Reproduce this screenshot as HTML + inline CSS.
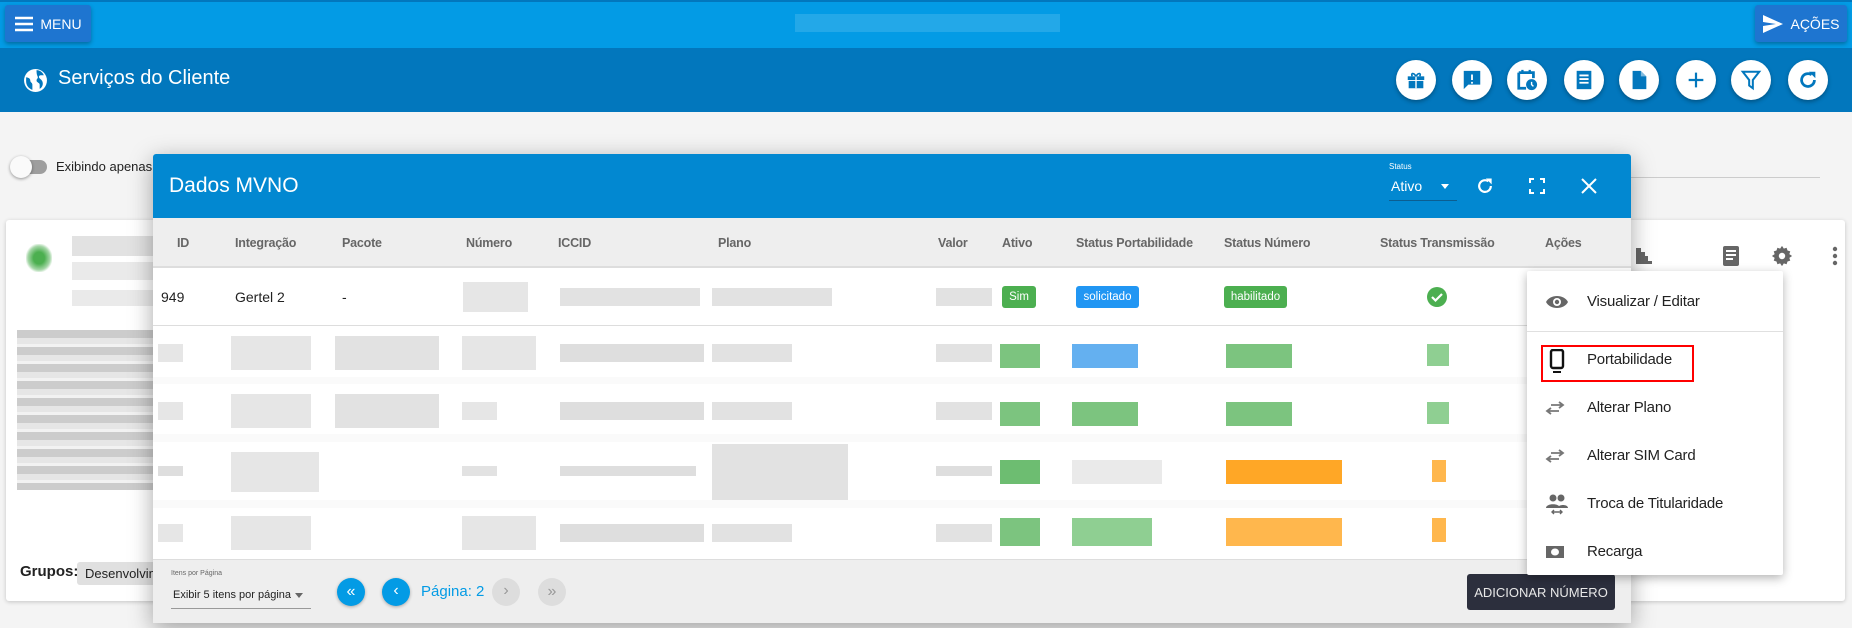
<!DOCTYPE html>
<html><head><meta charset="utf-8"><style>
*{box-sizing:border-box;margin:0;padding:0}
body{width:1852px;height:628px;overflow:hidden;background:#f4f4f4;font-family:"Liberation Sans",Roboto,sans-serif;position:relative}
.a{position:absolute}
.topbar{left:0;top:0;width:1852px;height:48px;background:#039be5;border-top:2px solid #0277bd}
.hdr{left:0;top:48px;width:1852px;height:64px;background:#0277bd}
.btn{background:#1e75d0;color:#fff;border-radius:3px;box-shadow:0 2px 4px rgba(0,0,0,.3);font-size:14px;display:flex;align-items:center;justify-content:center;gap:6px}
.rb{width:40px;height:40px;border-radius:50%;background:#fff;top:60px;display:flex;align-items:center;justify-content:center;box-shadow:0 2px 4px rgba(0,0,0,.3)}
.card{left:6px;top:220px;width:1839px;height:381px;background:#fff;border-radius:3px;box-shadow:0 1px 4px rgba(0,0,0,.2)}
.dlg{left:153px;top:154px;width:1478px;height:469px;background:#fff;border-radius:3px;box-shadow:0 6px 24px rgba(0,0,0,.35);overflow:hidden}
.th{font-size:12.5px;font-weight:bold;color:#666;top:236px;letter-spacing:-.2px}
.bl{background:#d6d6d6}
.badge{height:22px;border-radius:3px;color:#fff;font-size:11.5px;display:flex;align-items:center;justify-content:center;top:286px}
.mi{font-size:15px;color:#222;left:1587px;letter-spacing:-.2px}
.ic{left:1545px}
</style></head><body>
<div class="a topbar"></div>
<div class="a btn" style="left:5px;top:5px;width:86px;height:37px;font-weight:500">
<svg width="20" height="16" viewBox="0 0 20 16"><path d="M1 2h18M1 8h18M1 14h18" stroke="#fff" stroke-width="2.4"/></svg>MENU</div>
<div class="a" style="left:795px;top:14px;width:265px;height:18px;background:rgba(255,255,255,.13)"></div>
<div class="a btn" style="left:1755px;top:5px;width:92px;height:37px">
<svg width="22" height="20" viewBox="0 0 22 20"><path d="M1 1L21 10 1 19 1 12 14 10 1 8Z" fill="#fff"/></svg>AÇÕES</div>
<div class="a hdr"></div>
<svg class="a" style="left:23px;top:68px" width="25" height="25" viewBox="0 0 24 24"><circle cx="12" cy="12" r="11" fill="#fff"/><path d="M3 9c2 0 4 1 4 3s2 2 2 4v5c-3-1-6-4-6-8zM13 2c3 0 6 2 7 5h-3c-2 0-2 2-1 3s3 2 3 5c0 2-1 4-3 5v-4c0-2-3-2-3-4s2-2 1-4-1-4-1-6z" fill="#0277bd"/></svg>
<div class="a" style="left:58px;top:67px;font-size:20px;color:#fff">Serviços do Cliente</div>
<div class="a rb" style="left:1396px"><svg width="22" height="22" viewBox="0 0 24 24"><rect x="3" y="8" width="18" height="4" fill="#0277bd"/><rect x="4" y="13" width="16" height="8" fill="#0277bd"/><path d="M12 8v13" stroke="#fff" stroke-width="1.5"/><path d="M12 8C9 3 6 5 8 8M12 8c3-5 6-3 4 0" stroke="#0277bd" stroke-width="1.8" fill="none"/></svg></div>
<div class="a rb" style="left:1452px"><svg width="22" height="22" viewBox="0 0 24 24"><path d="M3 2h18v15H8l-5 5z" fill="#0277bd"/><path d="M12 6v6M12 14v2" stroke="#fff" stroke-width="2"/></svg></div>
<div class="a rb" style="left:1507px"><svg width="22" height="22" viewBox="0 0 24 24"><path d="M3 4h16v6M3 4v17h8" stroke="#0277bd" stroke-width="3" fill="none"/><path d="M7 1v4M15 1v4" stroke="#0277bd" stroke-width="2.5"/><circle cx="17" cy="17" r="6" fill="#0277bd"/><path d="M17 14v3l2 2" stroke="#fff" stroke-width="1.5" fill="none"/></svg></div>
<div class="a rb" style="left:1564px"><svg width="22" height="22" viewBox="0 0 24 24"><rect x="4" y="2" width="16" height="20" fill="#0277bd"/><path d="M7 7h10M7 11h10M7 15h10" stroke="#fff" stroke-width="2"/></svg></div>
<div class="a rb" style="left:1619px"><svg width="22" height="22" viewBox="0 0 24 24"><path d="M5 2h9l6 6v14H5z" fill="#0277bd"/><path d="M14 2v6h6" fill="#fff" opacity=".5"/></svg></div>
<div class="a rb" style="left:1676px"><svg width="22" height="22" viewBox="0 0 24 24"><path d="M12 4v16M4 12h16" stroke="#0277bd" stroke-width="2.4"/></svg></div>
<div class="a rb" style="left:1731px"><svg width="22" height="22" viewBox="0 0 24 24"><path d="M3 3h18l-7 9v9l-4-3v-6z" stroke="#0277bd" stroke-width="2.2" fill="none"/></svg></div>
<div class="a rb" style="left:1788px"><svg width="22" height="22" viewBox="0 0 24 24"><path d="M19 12a7 7 0 1 1-3-5.7" stroke="#0277bd" stroke-width="3" fill="none"/><path d="M13 3h7v7z" fill="#0277bd"/></svg></div>

<div class="a" style="left:12px;top:160px;width:35px;height:14px;border-radius:7px;background:#9e9e9e"></div>
<div class="a" style="left:10px;top:156px;width:22px;height:22px;border-radius:50%;background:#fafafa;box-shadow:0 1px 3px rgba(0,0,0,.4)"></div>
<div class="a" style="left:56px;top:159px;font-size:13px;color:#222">Exibindo apenas</div>
<div class="a" style="left:1630px;top:177px;width:190px;height:1px;background:#ccc"></div>

<div class="a card"></div>
<div class="a" style="left:26px;top:244px;width:26px;height:28px;background:radial-gradient(#4caf50 30%,#a5d6a7 60%,transparent 75%)"></div>
<div class="a bl" style="left:72px;top:236px;width:90px;height:20px;opacity:.7"></div>
<div class="a bl" style="left:72px;top:262px;width:90px;height:18px;opacity:.5"></div>
<div class="a bl" style="left:72px;top:290px;width:90px;height:16px;opacity:.5"></div>
<div class="a bl" style="left:17px;top:330px;width:140px;height:160px;opacity:.75;background:repeating-linear-gradient(#bbb 0 8px,#ddd 8px 14px,#eee 14px 17px)"></div>
<div class="a" style="left:20px;top:563px;font-size:15px;font-weight:bold;color:#222">Grupos:</div>
<div class="a" style="left:77px;top:562px;width:80px;height:23px;background:#e0e0e0;border-radius:3px;font-size:13px;color:#222;padding:4px 8px;overflow:hidden;white-space:nowrap">Desenvolvimento</div>
<svg class="a" style="left:1634px;top:246px" width="20" height="20" viewBox="0 0 20 20"><path d="M2 2v16h16v-3H14V10h-3V6H7V2z" fill="#666"/></svg>
<svg class="a" style="left:1721px;top:245px" width="20" height="22" viewBox="0 0 20 22"><rect x="2" y="1" width="16" height="20" rx="2" fill="#666"/><path d="M5 6h10M5 10h10M5 14h7" stroke="#fff" stroke-width="2"/></svg>
<svg class="a" style="left:1771px;top:245px" width="22" height="22" viewBox="0 0 24 24"><path d="M12 1l2 3 3-1 1 3 3 1-1 3 3 2-3 2 1 3-3 1-1 3-3-1-2 3-2-3-3 1-1-3-3-1 1-3-3-2 3-2-1-3 3-1 1-3 3 1z" fill="#666"/><circle cx="12" cy="12" r="3.5" fill="#fff"/></svg>
<svg class="a" style="left:1832px;top:246px" width="6" height="20" viewBox="0 0 6 20"><circle cx="3" cy="3" r="2.2" fill="#666"/><circle cx="3" cy="10" r="2.2" fill="#666"/><circle cx="3" cy="17" r="2.2" fill="#666"/></svg>

<div class="a dlg">
<div class="a" style="left:0;top:0;width:1478px;height:64px;background:#0288d1"></div>
<div class="a" style="left:16px;top:20px;font-size:21px;color:#fff">Dados MVNO</div>
<div class="a" style="left:1236px;top:8px;font-size:8px;color:#fff">Status</div>
<div class="a" style="left:1238px;top:24px;font-size:14px;color:#fff">Ativo</div>
<div class="a" style="left:1288px;top:30px;width:0;height:0;border:4px solid transparent;border-top:5px solid #fff"></div>
<div class="a" style="left:1236px;top:46px;width:68px;height:1px;background:#0b5e91"></div>
<svg class="a" style="left:1322px;top:22px" width="20" height="20" viewBox="0 0 24 24"><path d="M19 12a7 7 0 1 1-3-5.7" stroke="#fff" stroke-width="2.6" fill="none"/><path d="M13 3h7v7z" fill="#fff"/></svg>
<svg class="a" style="left:1376px;top:24px" width="16" height="16" viewBox="0 0 16 16"><path d="M1 5V1h4M11 1h4v4M15 11v4h-4M5 15H1v-4" stroke="#fff" stroke-width="2" fill="none"/></svg>
<svg class="a" style="left:1428px;top:24px" width="16" height="16" viewBox="0 0 16 16"><path d="M1 1l14 14M15 1L1 15" stroke="#fff" stroke-width="2"/></svg>
<div class="a" style="left:0;top:64px;width:1478px;height:50px;background:#eeeeee;border-bottom:2px solid #ddd"></div>
</div>
<div class="a th" style="left:177px">ID</div>
<div class="a th" style="left:235px">Integração</div>
<div class="a th" style="left:342px">Pacote</div>
<div class="a th" style="left:466px">Número</div>
<div class="a th" style="left:558px">ICCID</div>
<div class="a th" style="left:718px">Plano</div>
<div class="a th" style="left:938px">Valor</div>
<div class="a th" style="left:1002px">Ativo</div>
<div class="a th" style="left:1076px">Status Portabilidade</div>
<div class="a th" style="left:1224px">Status Número</div>
<div class="a th" style="left:1380px">Status Transmissão</div>
<div class="a th" style="left:1545px">Ações</div>

<div class="a" style="left:161px;top:289px;font-size:14px;color:#222">949</div>
<div class="a" style="left:235px;top:289px;font-size:14px;color:#222">Gertel 2</div>
<div class="a" style="left:342px;top:289px;font-size:14px;color:#222">-</div>
<div class="a bl" style="left:463px;top:282px;width:65px;height:30px;opacity:.6"></div>
<div class="a bl" style="left:560px;top:288px;width:140px;height:18px;opacity:.7"></div>
<div class="a bl" style="left:712px;top:288px;width:120px;height:18px;opacity:.7"></div>
<div class="a bl" style="left:936px;top:288px;width:56px;height:18px;opacity:.7"></div>
<div class="a badge" style="left:1002px;width:34px;background:#4caf50">Sim</div>
<div class="a badge" style="left:1076px;width:63px;background:#2196f3">solicitado</div>
<div class="a badge" style="left:1224px;width:63px;background:#4caf50">habilitado</div>
<svg class="a" style="left:1427px;top:287px" width="20" height="20" viewBox="0 0 20 20"><circle cx="10" cy="10" r="10" fill="#4caf50"/><path d="M5 10l3.5 3.5L15 7" stroke="#fff" stroke-width="2.2" fill="none"/></svg>
<div class="a" style="left:153px;top:325px;width:1478px;height:1px;background:#ddd"></div>

<div class="a" style="left:153px;top:377px;width:1374px;height:7px;background:#fafafa"></div>
<div class="a" style="left:153px;top:434px;width:1374px;height:8px;background:#fafafa"></div>
<div class="a" style="left:153px;top:500px;width:1374px;height:8px;background:#fafafa"></div>

<div class="a bl" style="left:158px;top:344px;width:25px;height:18px;opacity:.6"></div>
<div class="a bl" style="left:231px;top:336px;width:80px;height:34px;opacity:.6"></div>
<div class="a bl" style="left:335px;top:336px;width:104px;height:34px;opacity:.7"></div>
<div class="a bl" style="left:462px;top:336px;width:74px;height:34px;opacity:.6"></div>
<div class="a bl" style="left:560px;top:344px;width:144px;height:18px;opacity:.8"></div>
<div class="a bl" style="left:712px;top:344px;width:80px;height:18px;opacity:.7"></div>
<div class="a bl" style="left:936px;top:344px;width:56px;height:18px;opacity:.7"></div>
<div class="a" style="left:1000px;top:344px;width:40px;height:24px;background:#7cc47f"></div>
<div class="a" style="left:1072px;top:344px;width:66px;height:24px;background:#64b0f0"></div>
<div class="a" style="left:1226px;top:344px;width:66px;height:24px;background:#7cc47f"></div>
<div class="a" style="left:1427px;top:344px;width:22px;height:22px;background:#8fcf92"></div>

<div class="a bl" style="left:158px;top:402px;width:25px;height:18px;opacity:.6"></div>
<div class="a bl" style="left:231px;top:394px;width:80px;height:34px;opacity:.6"></div>
<div class="a bl" style="left:335px;top:394px;width:104px;height:34px;opacity:.7"></div>
<div class="a bl" style="left:462px;top:402px;width:35px;height:18px;opacity:.6"></div>
<div class="a bl" style="left:560px;top:402px;width:144px;height:18px;opacity:.8"></div>
<div class="a bl" style="left:712px;top:402px;width:80px;height:18px;opacity:.7"></div>
<div class="a bl" style="left:936px;top:402px;width:56px;height:18px;opacity:.7"></div>
<div class="a" style="left:1000px;top:402px;width:40px;height:24px;background:#7cc47f"></div>
<div class="a" style="left:1072px;top:402px;width:66px;height:24px;background:#7cc47f"></div>
<div class="a" style="left:1226px;top:402px;width:66px;height:24px;background:#7cc47f"></div>
<div class="a" style="left:1427px;top:402px;width:22px;height:22px;background:#8fcf92"></div>

<div class="a bl" style="left:158px;top:466px;width:25px;height:10px;opacity:.8"></div>
<div class="a bl" style="left:231px;top:452px;width:88px;height:40px;opacity:.6"></div>
<div class="a bl" style="left:462px;top:466px;width:35px;height:10px;opacity:.7"></div>
<div class="a bl" style="left:560px;top:466px;width:136px;height:10px;opacity:.8"></div>
<div class="a bl" style="left:712px;top:444px;width:136px;height:56px;opacity:.7"></div>
<div class="a bl" style="left:936px;top:466px;width:56px;height:10px;opacity:.8"></div>
<div class="a" style="left:1000px;top:460px;width:40px;height:24px;background:#6dbd71"></div>
<div class="a bl" style="left:1072px;top:460px;width:90px;height:24px;opacity:.5"></div>
<div class="a" style="left:1226px;top:460px;width:116px;height:24px;background:#ffa726"></div>
<div class="a" style="left:1432px;top:460px;width:14px;height:22px;background:#ffb74d"></div>

<div class="a bl" style="left:158px;top:524px;width:25px;height:18px;opacity:.6"></div>
<div class="a bl" style="left:231px;top:516px;width:80px;height:34px;opacity:.6"></div>
<div class="a bl" style="left:462px;top:516px;width:74px;height:34px;opacity:.6"></div>
<div class="a bl" style="left:560px;top:524px;width:144px;height:18px;opacity:.8"></div>
<div class="a bl" style="left:712px;top:524px;width:80px;height:18px;opacity:.7"></div>
<div class="a bl" style="left:936px;top:524px;width:56px;height:18px;opacity:.7"></div>
<div class="a" style="left:1000px;top:518px;width:40px;height:28px;background:#7cc47f"></div>
<div class="a" style="left:1072px;top:518px;width:80px;height:28px;background:#8fcf92"></div>
<div class="a" style="left:1226px;top:518px;width:116px;height:28px;background:#ffb74d"></div>
<div class="a" style="left:1432px;top:518px;width:14px;height:24px;background:#ffb74d"></div>

<div class="a" style="left:153px;top:559px;width:1478px;height:64px;background:#eeeeee;border-top:1px solid #ddd"></div>
<div class="a" style="left:171px;top:570px;font-size:7px;color:#666">Itens por Página</div>
<div class="a" style="left:173px;top:589px;font-size:11px;color:#222">Exibir 5 itens por página</div>
<div class="a" style="left:295px;top:593px;border:4px solid transparent;border-top:5px solid #666"></div>
<div class="a" style="left:171px;top:608px;width:140px;height:1px;background:#999"></div>
<div class="a" style="left:337px;top:578px;width:28px;height:28px;border-radius:50%;background:#039be5;color:#fff;font-size:16px;text-align:center;line-height:27px;box-shadow:0 1px 3px rgba(0,0,0,.3)">«</div>
<div class="a" style="left:382px;top:578px;width:28px;height:28px;border-radius:50%;background:#039be5;color:#fff;font-size:16px;text-align:center;line-height:26px;box-shadow:0 1px 3px rgba(0,0,0,.3)">‹</div>
<div class="a" style="left:421px;top:583px;font-size:15px;color:#039be5">Página: 2</div>
<div class="a" style="left:492px;top:578px;width:28px;height:28px;border-radius:50%;background:#ddd;color:#999;font-size:16px;text-align:center;line-height:26px">›</div>
<div class="a" style="left:538px;top:578px;width:28px;height:28px;border-radius:50%;background:#ddd;color:#999;font-size:16px;text-align:center;line-height:27px">»</div>
<div class="a" style="left:1467px;top:574px;width:148px;height:36px;background:#2c2f3d;border-radius:3px;color:#e8e8e8;font-size:13px;display:flex;align-items:center;justify-content:center">ADICIONAR NÚMERO</div>

<div class="a" style="left:1527px;top:271px;width:256px;height:304px;background:#fff;border-radius:2px;box-shadow:0 3px 10px rgba(0,0,0,.3)"></div>
<div class="a" style="left:1527px;top:331px;width:256px;height:1px;background:#e0e0e0"></div>
<svg class="a ic" style="top:293px" width="24" height="18" viewBox="0 0 24 18"><path d="M1 9C5 1 19 1 23 9 19 17 5 17 1 9z" fill="#666"/><circle cx="12" cy="9" r="4" fill="#fff"/><circle cx="12" cy="9" r="2.2" fill="#666"/></svg>
<div class="a mi" style="top:293px">Visualizar / Editar</div>
<div class="a" style="left:1541px;top:345px;width:153px;height:37px;border:2px solid #f00"></div>
<svg class="a" style="left:1549px;top:349px" width="16" height="26" viewBox="0 0 16 26"><rect x="2" y="1" width="12" height="18" rx="2" fill="none" stroke="#111" stroke-width="2.4"/><path d="M4 23h8" stroke="#111" stroke-width="2"/></svg>
<div class="a mi" style="top:351px">Portabilidade</div>
<svg class="a ic" style="top:401px" width="20" height="14" viewBox="0 0 20 14"><path d="M6 4h12M14 1l4 3-4 3M14 10H2M6 7l-4 3 4 3" stroke="#777" stroke-width="1.8" fill="none"/></svg>
<div class="a mi" style="top:399px">Alterar Plano</div>
<svg class="a ic" style="top:449px" width="20" height="14" viewBox="0 0 20 14"><path d="M6 4h12M14 1l4 3-4 3M14 10H2M6 7l-4 3 4 3" stroke="#777" stroke-width="1.8" fill="none"/></svg>
<div class="a mi" style="top:447px">Alterar SIM Card</div>
<svg class="a ic" style="top:494px" width="24" height="22" viewBox="0 0 24 22"><circle cx="8" cy="4" r="3.5" fill="#666"/><circle cx="16" cy="4" r="3.5" fill="#666"/><path d="M1 14c0-5 14-5 14 0zM13 14c0-4 10-4 10 0z" fill="#666"/><path d="M8 18h8M9 16l-2 2 2 2M15 16l2 2-2 2" stroke="#666" stroke-width="1.4" fill="none"/></svg>
<div class="a mi" style="top:495px">Troca de Titularidade</div>
<svg class="a ic" style="top:545px" width="20" height="14" viewBox="0 0 20 14"><rect x="1" y="1" width="18" height="12" fill="#666"/><ellipse cx="10" cy="7" rx="4" ry="3.5" fill="#fff"/></svg>
<div class="a mi" style="top:543px">Recarga</div>
</body></html>
